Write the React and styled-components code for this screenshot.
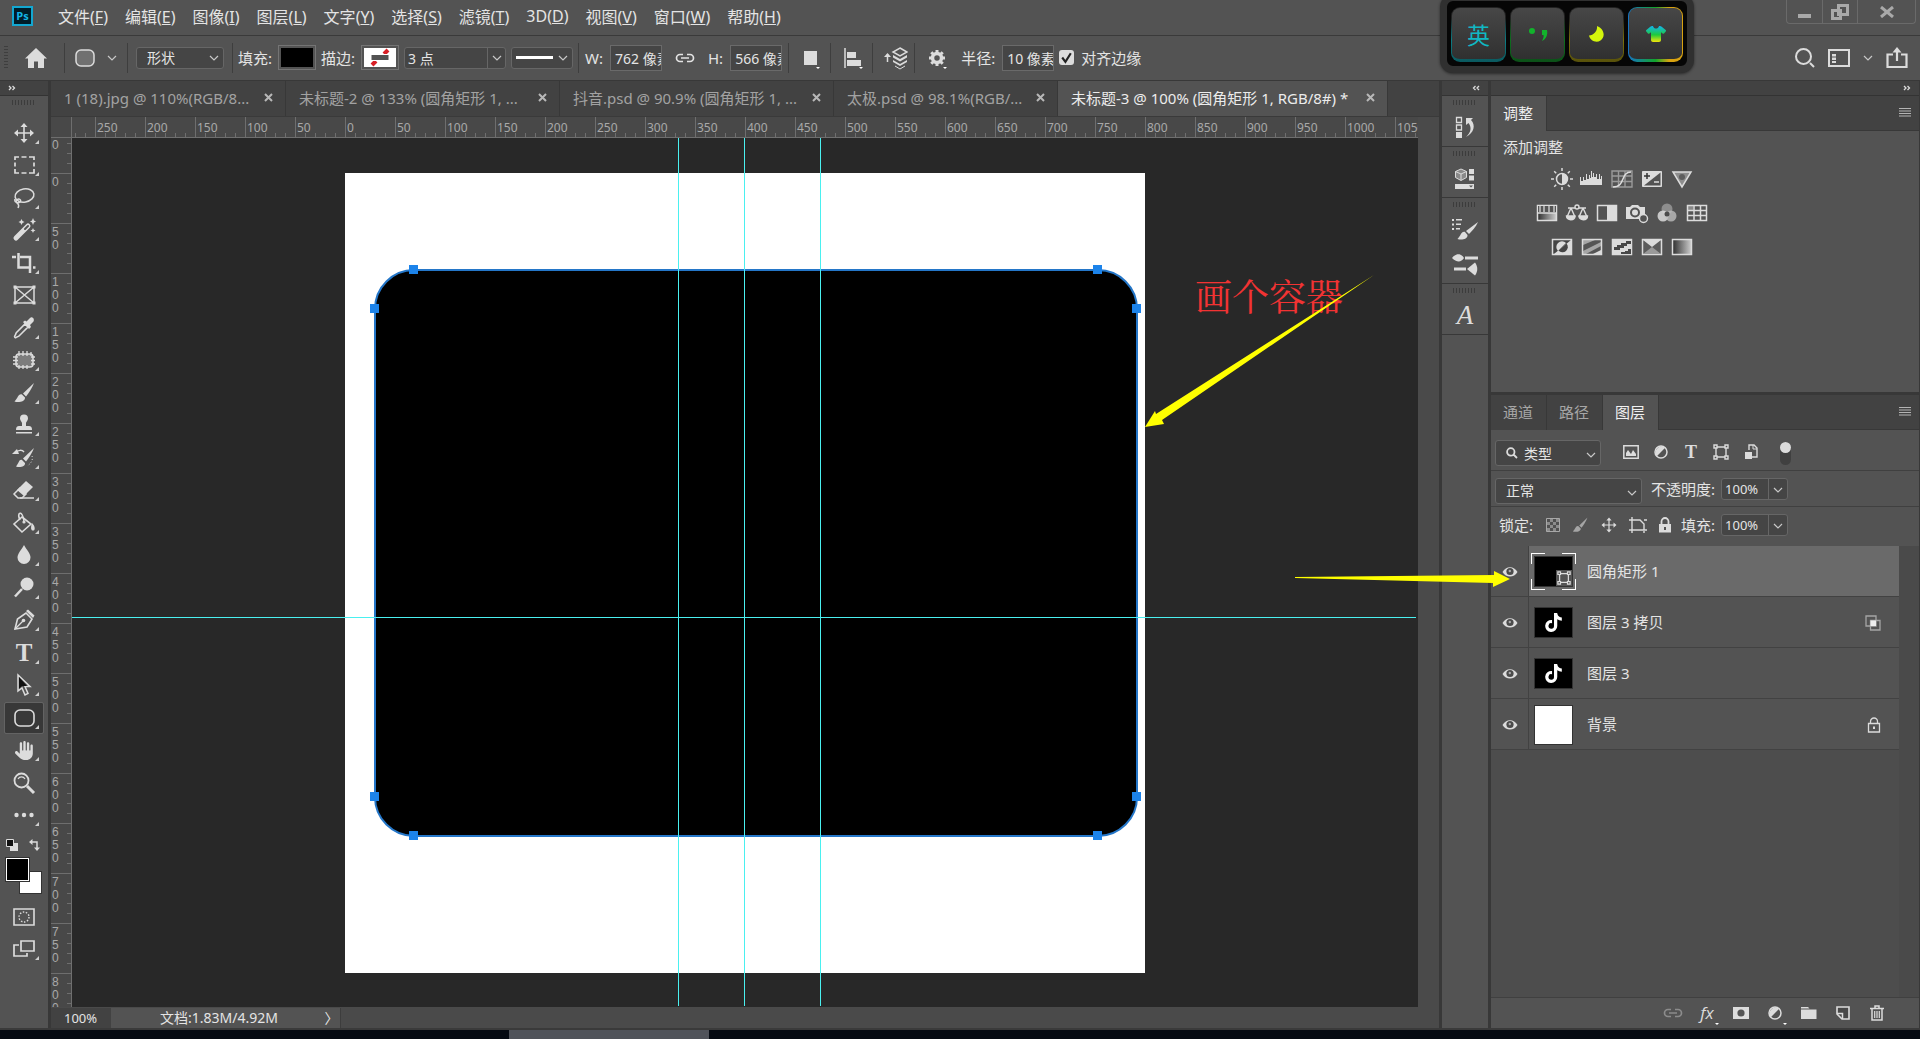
import React, { useState } from 'react'
import styled, { createGlobalStyle } from 'styled-components'
import { FaTiktok, FaHand, FaShirt } from 'react-icons/fa6'

const GlobalStyle = createGlobalStyle`
  * {
    box-sizing: border-box;
  }
  body {
    margin: 0;
    background: #050a12;
    color: #e4e4e4;
    font-family: 'Noto Sans', 'Noto Sans CJK SC', sans-serif;
    font-size: 15px;
  }
  button, input, select {
    font: inherit;
    color: inherit;
  }
  button {
    background: none;
    border: 0;
    padding: 0;
    cursor: pointer;
  }
  svg {
    display: block;
    flex: none;
  }
`

const L = '#dcdcdc'

// width, height, drawing
const ICONS = {
  home: [22, 20, <path d="M11 0 22 10.500H19V20H13V13.500H9V20H3V10.500H0z" fill={L} />],
  roundRect: [22, 20, <rect x="1" y="2" width="18" height="16" rx="5" fill="#707070" stroke={L} strokeWidth="1.500" />],
  chevron: [10, 6, <path d="M1 1l4 4 4-4" fill="none" stroke="#c8c8c8" strokeWidth="1.200" />],
  noStroke: [32, 19, <g><path d="M0 0h32v19H0z" fill="#fff" /><path d="M8 17 12 13M20 6 24 2" stroke="#d81f26" strokeWidth="4" /><path d="M7 6.500h18v6H7z" fill="#535353" stroke="#fff" /></g>],
  link: [20, 12, <path d="M8 2.500H5a3.500 3.500 0 0 0 0 7h3M12 2.500h3a3.500 3.500 0 0 1 0 7h-3M6 6h8" fill="none" stroke="currentColor" strokeWidth="1.700" />],
  square: [16, 22, <g><path d="M0 4h13v14H0z" fill={L} /><path d="M12 20h4l-2 2z" fill="#fff" /></g>],
  align: [20, 22, <g><path d="M1 1v20" stroke={L} strokeWidth="1.500" /><path d="M3 5h9v6H3zM3 13h14v6H3z" fill={L} /><path d="M15 20h4l-2 2z" fill="#fff" /></g>],
  stack: [24, 24, <g fill={L}><path d="M16 2l7 4-7 4-7-4z" fill="none" stroke={L} strokeWidth="1.500" /><path d="M9 9l7 4 7-4v2.500l-7 4-7-4z" /><path d="M9 14l7 4 7-4v2l-7 4-7-4z" /><path d="M11 20l5 3 5-3" fill="none" stroke={L} /><path d="M3.500 8v8" stroke={L} strokeWidth="1.500" /><path d="M0 11l3.500-4L7 11z" /></g>],
  gear: [20, 22, <g><circle cx="9" cy="11" r="4.500" fill="none" stroke={L} strokeWidth="3.500" /><path d="M9 3v4M9 15v4M1 11h4M13 11h4M3.300 5.300l2.900 2.900M11.800 13.800l2.900 2.900M14.700 5.300l-2.900 2.900M6.200 13.800l-2.900 2.900" stroke={L} strokeWidth="3" /><path d="M15 20h4l-2 2z" fill="#fff" /></g>],
  search: [20, 20, <path d="M15 15l4 4M8.500 1a7.500 7.500 0 1 0 0 15 7.500 7.500 0 0 0 0-15z" fill="none" stroke={L} strokeWidth="2" />],
  workspace: [22, 18, <g><path d="M1 1h20v16H1z" fill="none" stroke={L} strokeWidth="2" /><path d="M4 5h4v2.500H4zM4 8.500h4V11H4zM4 12h4v2H4z" fill={L} /></g>],
  share: [22, 22, <g><path d="M7 7.500H1.500V20h19V7.500H15M11 3v11" fill="none" stroke={L} strokeWidth="2.200" /><path d="M6.500 5.500 11 0l4.500 5.500z" fill={L} /></g>],
  close: [9, 9, <path d="M1 1l7 7M8 1 1 8" stroke="currentColor" strokeWidth="2" />],
  menu: [12, 9, <path d="M0 .5h12M0 3h12M0 5.500h12M0 8h12" stroke="#b4b4b4" strokeWidth="1" />],
  left: [8, 6, <path d="M3.500 1 1.500 3l2 2M7 1 5 3l2 2" fill="none" stroke={L} strokeWidth="1.300" />],
  right: [8, 6, <path d="M1 1l2 2-2 2M4.500 1l2 2-2 2" fill="none" stroke={L} strokeWidth="1.300" />],
  winMin: [14, 14, <path d="M0 9h13v4H0z" fill="#a9a9a9" />],
  winRestore: [18, 16, <path d="M7.500 1.500h9v9h-9zM1.500 6.500h8v8h-8z" fill="none" stroke="#a9a9a9" strokeWidth="3" />],
  winClose: [14, 12, <path d="M1 1l12 10M13 1 1 11" stroke="#a9a9a9" strokeWidth="3" />],

  move: [24, 24, <g fill={L}><path d="M12 4v16M4 12h16" stroke={L} strokeWidth="1.600" /><path d="M8.500 6 12 2l3.500 4zM8.500 18l3.500 4 3.500-4zM6 8.500 2 12l4 3.500zM18 8.500l4 3.500-4 3.500z" /></g>],
  marquee: [24, 24, <path d="M7 4H3v3M3 9.500v4M3 16v4h4M9.500 4h5M9.500 20h5M17 4h5v3M22 9.500v4M22 16v4h-5" fill="none" stroke={L} strokeWidth="1.700" />],
  lasso: [24, 24, <g fill="none" stroke={L} strokeWidth="1.500"><ellipse cx="12.500" cy="9.500" rx="9.500" ry="6.500" transform="rotate(-10 12.500 9.500)" /><path d="M3 13c-1 3 3 5 5 3s-1-4-3-2 0 3 1 4 1 2 0 4" /></g>],
  wand: [24, 24, <g fill={L}><path d="M4 20 16 8" stroke={L} strokeWidth="5" strokeLinecap="round" /><path d="M13 11l3-3" stroke="#535353" strokeWidth="2" strokeLinecap="round" /><path d="M9.500 1l1 2 2 1-2 1-1 2-1-2-2-1 2-1zM21 0l1 2.500 2 1-2 1-1 2.500-1-2.500-2-1 2-1zM21 10l.8 1.700 1.700.8-1.700.8L21 15l-.8-1.700-1.700-.8 1.700-.8z" /></g>],
  crop: [24, 24, <path d="M0 6h4M6.500 2v14.500H19M8 6h10v16M21 16.500h2.500" fill="none" stroke={L} strokeWidth="2.500" />],
  frame: [24, 24, <g><path d="M3 4h19v16H3zM3 4l19 16M22 4 3 20" fill="none" stroke={L} strokeWidth="1.500" /><path d="M1.500 2.500h3v3h-3zM20.500 2.500h3v3h-3zM1.500 18.500h3v3h-3zM20.500 18.500h3v3h-3z" fill={L} /></g>],
  eyedropper: [24, 24, <g><path d="M13 8l3 3L7 20c-1 1-2 .5-3 1.500s-2-1-1-2 .5-2 1.500-3z" fill="none" stroke={L} strokeWidth="1.600" /><path d="M11 6l2-1.500 1.500 1L18 2c2-2 5 1 3.500 3.500L18 9l1 2-2 2z" fill={L} /></g>],
  patch: [24, 24, <g><rect x="4" y="6" width="17" height="13" rx="3" fill="#7c7c7c" stroke={L} strokeWidth="1.600" /><path d="M7 3v5M11 3v5M15 3v5M19 4v4M7 17v4M11 17v4M15 17v4M1 9h5M1 12.500h5M1 16h5M19 9h4M19 12.500h4M19 16h4" stroke={L} strokeWidth="1.300" /></g>],
  brush: [24, 24, <g fill={L}><path d="M22 2 11 12.500l3 3C17 12 20 7 22 2z" /><path d="M10 13.500c-4-1-4 4-7.500 7 4 1.500 11 0 10.500-4z" /></g>],
  stamp: [24, 24, <g fill={L}><path d="M12 1.500a4 4 0 0 0-4 4c0 2 1.700 3 2 4.500v3H7c-2 0-3 1-3 4h16c0-3-1-4-3-4h-3v-3c.3-1.500 2-2.500 2-4.500a4 4 0 0 0-4-4z" /><path d="M4 19h16v1.500H4z" /></g>],
  history: [24, 24, <g fill={L}><path d="M22 2 11 12.500l3 3C17 12 20 7 22 2z" /><path d="M10 14c-3-1-3 3-6 6.500 4 1.500 9.500 0 9-3.500z" /><path d="M12 6C10 3.500 6 4 4 6.500" fill="none" stroke={L} strokeWidth="1.500" /><path d="M0 8l5-5 2 5z" /><path d="M20 10c1 3 0 7-5 10" fill="none" stroke={L} strokeDasharray="1 2" /></g>],
  eraser: [24, 24, <g><path d="M14 3l7 6-9 9-7-6z" fill={L} /><path d="M8 10l6 6-4 4H6l-4-4z" fill="none" stroke={L} strokeWidth="1.500" /><path d="M8 20h14" stroke={L} strokeWidth="1.500" /></g>],
  bucket: [24, 24, <g><path d="M10 6l9 7-9 8-8-8z" fill="none" stroke={L} strokeWidth="1.600" /><path d="M12 11c0-5-3-11-5-8-1 2 0 4 1 6" fill="none" stroke={L} strokeWidth="1.500" /><circle cx="12" cy="11" r="1.600" fill={L} /><path d="M20 12c3 3 3.500 7 1.500 7.500s-3.500-1.500-1.500-7.500z" fill={L} /></g>],
  drop: [24, 24, <path d="M12 2c3 5.500 6.500 8.500 6.500 12.500a6.500 6.500 0 0 1-13 0C5.500 10.500 9 7.500 12 2z" fill={L} />],
  dodge: [24, 24, <g><circle cx="15" cy="8" r="6.500" fill={L} /><path d="M10 13l-7 7.500" stroke={L} strokeWidth="2.500" /></g>],
  pen: [24, 24, <g><path d="M3 21 5.500 11 14 5l6 6-5 8z" fill="none" stroke={L} strokeWidth="1.600" /><path d="M3 21l8-8" stroke={L} strokeWidth="1.300" /><circle cx="11.500" cy="12.500" r="1.800" fill={L} /><path d="M14 3l2-1.500 6.500 6L21 10z" fill={L} /></g>],
  arrow: [24, 24, <g><path d="M6 2v16l4-3 3 7 3-1.500-3-7h5z" fill="#535353" stroke={L} strokeWidth="1.500" /><path d="M7 4v11.500l3-2.500h5z" fill="#111" /></g>],
  rounded: [24, 24, <rect x="3" y="4" width="19" height="16" rx="5" fill="none" stroke={L} strokeWidth="1.600" />],
  zoom: [24, 24, <g><circle cx="9.500" cy="9.500" r="7" fill="none" stroke={L} strokeWidth="1.800" /><path d="M6 8a4 4 0 0 1 7 0" fill="none" stroke={L} strokeWidth="1.200" /><path d="M15 15l7 7" stroke={L} strokeWidth="3" /></g>],
  dots: [24, 24, <g fill={L}><circle cx="4.500" cy="12" r="2.200" /><circle cx="12" cy="12" r="2.200" /><circle cx="19.500" cy="12" r="2.200" /></g>],
  defaults: [12, 12, <g><path d="M4 4h8v8H4z" fill={L} /><path d="M.5.5h7v7h-7z" fill="#111" stroke={L} /></g>],
  swap: [12, 12, <g><path d="M2 3h6v7" fill="none" stroke={L} strokeWidth="1.500" /><path d="M0 3l3.500-3v6zM5 8.500h6L8 12z" fill={L} /></g>],
  quickMask: [24, 24, <g fill="none" stroke={L}><path d="M2 4h20v16H2z" strokeWidth="1.600" /><circle cx="12" cy="12" r="5" strokeWidth="1.400" strokeDasharray="1.500 1.600" /></g>],
  screen: [24, 24, <g fill="none" stroke={L} strokeWidth="1.700"><path d="M9 4h13v10H9z" /><path d="M7 8H2v11h13v-3" /></g>],

  historyPanel: [24, 24, <g><path d="M3.500 2.500h5v5h-5zM3.500 10h5v5h-5z" fill="none" stroke={L} strokeWidth="1.300" /><path d="M3 17h6v6H3z" fill={L} /><path d="M13 3h7l-2 2c5 5 3 13-5 17 5-5 6-9 2.500-14L13 10z" fill={L} /></g>],
  library: [24, 24, <g><path d="M8 3l5.500 2.500v6L8 14.500l-5.500-3v-6z" fill="#8a8a8a" stroke={L} /><path d="M2.500 5.500 8 8l5.500-2.500M8 8v6" fill="none" stroke={L} /><path d="M16 3h5v5h-5zM16 9.500h5v5h-5zM2 18h19v5H2z" fill={L} /><path d="M16 19.500h4l-2 2z" fill="#535353" /></g>],
  brushPanel: [28, 24, <g fill={L}><path d="M1 2h2v2H1zM1 6.500h2v2H1zM1 11h2v2H1zM5 2h6v1.500H5zM5 6.500h5V8H5zM5 11h4v1.500H5z" /><path d="M27 5 15 14l3 3c3-3 7-7 9-12z" /><path d="M14 15c-4-1-4 4-7.500 7 4 1.500 10.500 0 10-4z" /></g>],
  brushes: [28, 24, <g fill={L}><path d="M1 6c4-5 9-5 12 0-3 5-8 4-12 0zM14 4.500h13v3H14zM3 15.500h12v3H3z" /><path d="M16 17l8-6.500c3 4 3 9 0 13z" /></g>],

  brightness: [22, 22, <g><circle cx="11" cy="11" r="5.500" fill="none" stroke={L} strokeWidth="1.500" /><path d="M11 5.500a5.500 5.500 0 0 1 0 11z" fill={L} /><path d="M11 0v3M11 19v3M0 11h3M19 11h3M3.200 3.200l2 2M16.800 16.800l2 2M18.800 3.200l-2 2M5.200 16.800l-2 2" stroke={L} strokeWidth="1.500" /></g>],
  levels: [24, 22, <path d="M0 17V9h1v4h2V9h1v3h2V6h1v5h2V7h1v3h1V3h1v6h1V5h1v4h2V6h1v5h2V6h1v5h1V8h1v9z" fill={L} />],
  curves: [22, 22, <g fill="none"><path d="M1 3h20v16H1zM7.500 3v16M14 3v16M1 8h20M1 13.500h20" stroke="#9a9a9a" strokeWidth="1.400" /><path d="M2 19c13 0 7-15 18-15" stroke={L} strokeWidth="1.500" /></g>],
  exposure: [22, 22, <g><path d="M1.500 3.500h19v15h-19z" fill={L} stroke={L} /><path d="M19.500 4.500v13H3z" fill="#535353" /><path d="M6 5v6M3 8h6" stroke="#333" strokeWidth="1.500" /><path d="M13 14h5" stroke={L} strokeWidth="1.500" /></g>],
  vibrance: [22, 22, <g><path d="M2 4h18l-9 15z" fill="#8d8d8d" stroke={L} strokeWidth="1.500" /><circle cx="11" cy="9" r="3" fill="#5d5d5d" /></g>],
  hue: [22, 22, <g><path d="M1.500 3.500h19v15h-19z" fill="url(#ramp)" stroke={L} strokeWidth="1.500" /><path d="M2 4h18v7H2z" fill="#555" /><path d="M4 4v6M8 4v6M13 4v6M18 4v6" stroke="#aaa" strokeWidth="2" /><path d="M2 11h18" stroke={L} strokeWidth="1.500" /></g>],
  balance: [24, 22, <g fill="none" stroke={L} strokeWidth="1.400"><circle cx="12" cy="5" r="2" /><path d="M3 6h7M14 6h7M6 6l-4 9M6 6l4 9M18 6l-4 9M18 6l4 9" /><path d="M1.500 14h8.500c0 5-8.500 5-8.500 0zM14 14h8.500c0 5-8.500 5-8.500 0z" fill={L} /></g>],
  blackWhite: [22, 22, <g><path d="M1.500 3.500h19v15h-19z" fill="none" stroke={L} strokeWidth="1.500" /><path d="M11 3h9v16h-9z" fill={L} /></g>],
  photo: [24, 22, <g><path d="M1 5h4l2-2h6l2 2h5v12H1z" fill={L} /><circle cx="10" cy="10.500" r="4" fill={L} stroke="#535353" strokeWidth="2" /><circle cx="18.500" cy="16.500" r="4" fill="#535353" stroke={L} strokeWidth="1.400" /></g>],
  mixer: [22, 22, <g><circle cx="11" cy="7" r="5.500" fill="#8d8d8d" /><circle cx="7" cy="14" r="5.500" fill={L} fillOpacity=".85" /><circle cx="15" cy="14" r="5.500" fill="#bdbdbd" fillOpacity=".8" /><circle cx="11" cy="12" r="2.500" fill="#4a4a4a" /></g>],
  lookup: [22, 22, <g><path d="M1.500 3.500h19v15h-19z" fill="#555" /><path d="M2 4h5v4H2z" fill="#888" /><path d="M1.500 3.500h19v15h-19zM8 3v16M14.500 3v16M1 8.500h20M1 13.500h20" fill="none" stroke={L} strokeWidth="1.500" /></g>],
  invert: [22, 22, <g><path d="M1.500 3.500h19v15h-19z" fill="#454545" stroke={L} strokeWidth="1.500" /><path d="M20 4 3 18h17z" fill={L} /><path d="M15 7a5 5 0 0 0-8 8z" fill={L} /><path d="M15.500 7.500a5 5 0 0 1-8 7z" fill="#454545" /></g>],
  posterize: [22, 22, <g><path d="M1.500 3.500h19v15h-19z" fill="#555" /><path d="M2 9 14 4H2zM2 15 20 6v4L5 18H2z" fill={L} fillOpacity=".6" /><path d="M12 18l8-4v4z" fill={L} /><path d="M1.500 3.500h19v15h-19z" fill="none" stroke={L} strokeWidth="1.500" /></g>],
  threshold: [22, 22, <g><path d="M1.500 3.500h19v15h-19z" fill={L} stroke={L} strokeWidth="1.500" /><path d="M3 14v-3h3V9h4V7h5V5h5v3h-4v2h-3v2H9v2z" fill="#484848" /><path d="M10 18v-2h4v-1h3v-2h3v5z" fill="#484848" /></g>],
  selective: [22, 22, <g><path d="M1.500 3.500h19v15h-19z" fill="#5c5c5c" stroke={L} strokeWidth="1.500" /><path d="M2 4h18l-9 7z" fill={L} /><path d="M2 18l9-7 9 7z" fill="#9a9a9a" /></g>],
  gradient: [22, 22, <path d="M1.500 3.500h19v15h-19z" fill="url(#ramp)" stroke={L} strokeWidth="1.500" />],

  image: [16, 14, <g><path d="M.8.8h14.400v12.400H.8z" fill="none" stroke={L} strokeWidth="1.500" /><path d="M3 11V8l2-3 3 4 2-4 3 4v2z" fill={L} /></g>],
  half: [14, 14, <g><circle cx="7" cy="7" r="6" fill="none" stroke={L} strokeWidth="1.500" /><path d="M11.200 2.800A6 6 0 0 0 2.800 11.200z" fill={L} /></g>],
  shape: [16, 16, <g fill="#535353" stroke={L} strokeWidth="1.400"><path d="M3 3h10v10H3z" /><path d="M1 1h3v3H1zM12 1h3v3h-3zM1 12h3v3H1zM12 12h3v3h-3z" /></g>],
  smart: [14, 16, <g><path d="M5 6V1h5l3 3v9H8" fill="none" stroke={L} strokeWidth="1.400" /><path d="M9 1v4h4" fill="none" stroke={L} /><path d="M1 8h7v7H1z" fill={L} /></g>],
  smallSearch: [12, 12, <path d="M7.500 7.500 11 11M4.800 1.200a3.700 3.700 0 1 0 0 7.400 3.700 3.700 0 0 0 0-7.400z" fill="none" stroke={L} strokeWidth="1.800" />],
  pixels: [14, 14, <g><path d="M.5.5h13v13H.5z" fill="#8c8c8c" stroke="#a8a8a8" /><path d="M1 1h3v3H1zM7 1h3v3H7zM4 4h3v3H4zM10 4h3v3h-3zM1 7h3v3H1zM7 7h3v3H7zM4 10h3v3H4zM10 10h3v3h-3z" fill="#505050" /></g>],
  artboard: [18, 16, <path d="M3 0v16M0 3h11l4 4v6H0M15 3h3M13 13h5M15 14v2" fill="none" stroke={L} strokeWidth="1.400" />],
  padlock: [14, 16, <g><path d="M3.500 8V4.500a3.500 3.500 0 0 1 7 0V8" fill="none" stroke={L} strokeWidth="1.800" /><path d="M1 7h12v8.500H1z" fill={L} /><path d="M6 10h2v3H6z" fill="#535353" /></g>],
  padlockLine: [14, 16, <g fill="none" stroke={L} strokeWidth="1.300"><path d="M3.500 6.500V4.500a3.500 3.500 0 0 1 7 0v2M1.500 6.500h11v8.500h-11z" /><path d="M6 9.500h2v2.500H6z" fill={L} stroke="none" /></g>],
  blend: [16, 16, <g fill="none" stroke="#a5a5a5" strokeWidth="1.300"><path d="M1 1h10v10H1zM5.500 5.500h9.500V15H5.500z" /><path d="M5.500 5.500H11V11H5.500z" fill="#eee" stroke="none" /></g>],
  eye: [16, 12, <g><path d="M.5 6C4-.5 12-.5 15.500 6 12 12 4 12 .5 6z" fill={L} /><circle cx="8" cy="5.500" r="3.600" fill="#4b4b4b" /><circle cx="7.800" cy="5" r="1.200" fill="#aaa" /></g>],
  mask: [16, 12, <g><path d="M0 0h16v12H0z" fill={L} /><circle cx="8" cy="6" r="3.600" fill="#535353" /></g>],
  folder: [16, 14, <path d="M0 1h7l1.500 1.500H0zM0 3.500h15.500V13H0z" fill={L} />],
  page: [14, 14, <g><path d="M1 1h12v12H6L1 8z" fill="#484848" stroke={L} strokeWidth="1.600" /><path d="M1 7.500h5.500V13" fill="none" stroke={L} strokeWidth="1.500" /></g>],
  trash: [14, 16, <g fill="none" stroke={L} strokeWidth="1.500"><path d="M0 3.500h14M5 3V1h4v2M2 4v11h10V4" /><path d="M4.700 6v7M7 6v7M9.300 6v7" strokeWidth="1.200" /></g>],
  punctuation: [22, 18, <g fill="#12b32c"><circle cx="5" cy="6" r="3" /><path d="M15 5h5c1 5-1 9-5 11 1-2 2-4 1.500-6H15z" /></g>],
  moon: [18, 18, <path d="M9 1c.5 5-3 9-8 9.500 1 5 7 8 11.500 5C18 11.500 16 3.500 9 1z" fill="#d4f50c" />],
}

const Icon = ({ name, size }) => {
  const [w, h, art] = ICONS[name]
  return (
    <svg width={size || w} height={size || h} viewBox={`0 0 ${w} ${h}`} aria-hidden="true">{art}</svg>
  )
}

const MENUS = [['文件', 'F'], ['编辑', 'E'], ['图像', 'I'], ['图层', 'L'], ['文字', 'Y'], ['选择', 'S'], ['滤镜', 'T'], ['3D', 'D'], ['视图', 'V'], ['窗口', 'W'], ['帮助', 'H']]

const DOCS = [
  { title: '1 (18).jpg @ 110%(RGB/8...', width: 235 },
  { title: '未标题-2 @ 133% (圆角矩形 1, ...', width: 274 },
  { title: '抖音.psd @ 90.9% (圆角矩形 1, ...', width: 274 },
  { title: '太极.psd @ 98.1%(RGB/...', width: 224 },
  { title: '未标题-3 @ 100% (圆角矩形 1, RGB/8#) *', width: 330 },
]

const TOOLS = ['move', 'marquee', 'lasso', 'wand', 'crop', 'frame', 'eyedropper', 'patch', 'brush', 'stamp', 'history', 'eraser', 'bucket', 'drop', 'dodge', 'pen', 'type', 'arrow', 'rounded', 'hand', 'zoom', 'dots']
const NO_FLYOUT = ['frame', 'zoom']

const TOP_MARKS = [250, 200, 150, 100, 50, 0, 50, 100, 150, 200, 250, 300, 350, 400, 450, 500, 550, 600, 650, 700, 750, 800, 850, 900, 950, 1000, 1050]
const SIDE_MARKS = [0, 50, 100, 150, 200, 250, 300, 350, 400, 450, 500, 550, 600, 650, 700, 750, 800]

const ADJUSTMENTS = [
  ['brightness', 'levels', 'curves', 'exposure', 'vibrance'],
  ['hue', 'balance', 'blackWhite', 'photo', 'mixer', 'lookup'],
  ['invert', 'posterize', 'threshold', 'selective', 'gradient'],
]

const LAYERS = [
  { name: '圆角矩形 1', kind: 'shape' },
  { name: '图层 3 拷贝', kind: 'tiktok', badge: 'blend' },
  { name: '图层 3', kind: 'tiktok' },
  { name: '背景', kind: 'plain', badge: 'padlockLine' },
]

const HANDLES = [[39, 0], [723, 0], [0, 39], [762, 39], [0, 527], [762, 527], [39, 566], [723, 566]]

const App = () => {
  const [activeDoc, setActiveDoc] = useState(4)
  const [tool, setTool] = useState('rounded')
  const [layer, setLayer] = useState(0)

  return (
    <>
      <GlobalStyle />
      <Defs width="0" height="0" aria-hidden="true">
        <linearGradient id="ramp"><stop offset="0" stopColor="#2e2e2e" /><stop offset="1" stopColor="#cfcfcf" /></linearGradient>
        <linearGradient id="shirt" x1="0" y1="0" x2="0" y2="1"><stop offset="0" stopColor="#12b4f0" /><stop offset=".55" stopColor="#1ecb3c" /><stop offset="1" stopColor="#f4e60a" /></linearGradient>
      </Defs>
      <Window>
        <MenuBar>
          <Logo>Ps</Logo>
          {MENUS.map(([label, key]) => (
            <MenuItem key={key}>{label}(<u>{key}</u>)</MenuItem>
          ))}
          <WindowControls>
            <WindowButton aria-label="最小化"><Icon name="winMin" /></WindowButton>
            <WindowButton aria-label="还原"><Icon name="winRestore" /></WindowButton>
            <WindowButton $wide aria-label="关闭"><Icon name="winClose" /></WindowButton>
          </WindowControls>
        </MenuBar>

        <OptionsBar>
          <VerticalGrip />
          <HomeButton aria-label="主页"><Icon name="home" /></HomeButton>
          <Separator />
          <OptionGroup $pad={10} $gap={10}>
            <Icon name="roundRect" />
            <Icon name="chevron" />
          </OptionGroup>
          <Separator />
          <OptionGroup $pad={8} $gap={5}>
            <SelectBox $width={88}>
              <select aria-label="工具模式"><option>形状</option></select>
              <Icon name="chevron" />
            </SelectBox>
          </OptionGroup>
          <Separator />
          <OptionGroup $pad={5} $gap={5}>
            <OptionLabel>填充:</OptionLabel>
            <SwatchButton aria-label="填充颜色"><BlackFill /></SwatchButton>
            <OptionLabel>描边:</OptionLabel>
            <SwatchButton aria-label="描边颜色"><Icon name="noStroke" /></SwatchButton>
            <Combo $width={102}>
              <input aria-label="描边宽度" defaultValue="3 点" />
              <button aria-label="宽度选项"><Icon name="chevron" /></button>
            </Combo>
            <LineButton aria-label="描边选项"><LineSample /><Icon name="chevron" /></LineButton>
          </OptionGroup>
          <Separator />
          <OptionGroup $pad={6} $gap={13}>
            <Field>W:<NumberInput defaultValue="762 像素" /></Field>
            <button aria-label="链接宽高"><Icon name="link" /></button>
            <Field>H:<NumberInput defaultValue="566 像素" /></Field>
          </OptionGroup>
          <Separator />
          {['square', 'align', 'stack'].map((name) => (
            <React.Fragment key={name}>
              <ToolOption aria-label={name}><Icon name={name} /></ToolOption>
              <Separator />
            </React.Fragment>
          ))}
          <ToolOption aria-label="gear"><Icon name="gear" /></ToolOption>
          <OptionGroup $pad={5} $gap={5}>
            <Field>半径:<NumberInput defaultValue="10 像素" /></Field>
            <Field><CheckInput type="checkbox" defaultChecked />对齐边缘</Field>
          </OptionGroup>
          <OptionsRight>
            <button aria-label="搜索"><Icon name="search" /></button>
            <button aria-label="工作区"><Icon name="workspace" /></button>
            <Icon name="chevron" />
            <button aria-label="共享"><Icon name="share" /></button>
          </OptionsRight>
        </OptionsBar>

        <Workspace>
          <ToolColumn>
            <CollapseBar $start><Icon name="right" /></CollapseBar>
            <Grip />
            <ToolList>
              {TOOLS.map((name) => (
                <ToolButton key={name} $active={tool === name} $flyout={!NO_FLYOUT.includes(name)} aria-label={name} onClick={() => setTool(name)}>
                  {name === 'type' ? <TypeGlyph>T</TypeGlyph> : name === 'hand' ? <FaHand size={19} color={L} /> : <Icon name={name} />}
                </ToolButton>
              ))}
            </ToolList>
            <ColorTools>
              <Icon name="defaults" />
              <Icon name="swap" />
            </ColorTools>
            <ColorPair>
              <ColorChip $color="#fff" />
              <ColorChip $front $color="#000" />
            </ColorPair>
            <ToolButton aria-label="quickMask"><Icon name="quickMask" /></ToolButton>
            <ToolButton $flyout aria-label="screen"><Icon name="screen" /></ToolButton>
          </ToolColumn>

          <Editor>
            <DocTabs>
              {DOCS.map((doc, i) => (
                <DocTab key={doc.title} $active={i === activeDoc} $width={doc.width}>
                  <button onClick={() => setActiveDoc(i)}>{doc.title}</button>
                  <button aria-label="关闭文档"><Icon name="close" /></button>
                </DocTab>
              ))}
            </DocTabs>
            <EditorBody>
              <EditorMain>
                <TopRuler>
                  <RulerCorner />
                  <TopLead />
                  {TOP_MARKS.map((mark, i) => <TopMark key={i}>{mark}</TopMark>)}
                </TopRuler>
                <StageRow>
                  <SideRuler>
                    <SideLead>0</SideLead>
                    {SIDE_MARKS.map((mark) => (
                      <SideMark key={mark}>{String(mark).split('').map((d, i) => <span key={i}>{d}</span>)}</SideMark>
                    ))}
                  </SideRuler>
                  <Stage>
                    <Artboard>
                      <ShapeLayer width="782" height="586" viewBox="-10 -10 782 586" aria-hidden="true">
                        <rect x="0" y="0" width="762" height="566" rx="39" fill="#000" stroke="#2476c8" strokeWidth="2" />
                        {HANDLES.map(([x, y]) => (
                          <rect key={`${x}-${y}`} x={x - 5} y={y - 5} width="9" height="9" fill="#1c83ea" />
                        ))}
                      </ShapeLayer>
                    </Artboard>
                    <GuideX $at={606} />
                    <GuideX $at={672} />
                    <GuideX $at={748} />
                    <GuideY $at={479} />
                  </Stage>
                </StageRow>
              </EditorMain>
              <ScrollTrack />
            </EditorBody>
            <StatusBar>
              <ZoomInput aria-label="缩放" defaultValue="100%" />
              <DocInfo>文档:1.83M/4.92M</DocInfo>
              <StatusMore aria-label="状态选项">〉</StatusMore>
            </StatusBar>
          </Editor>

          <IconStrip>
            <CollapseBar><Icon name="left" /></CollapseBar>
            <StripGroup><Grip /><StripButton aria-label="历史记录"><Icon name="historyPanel" /></StripButton></StripGroup>
            <StripGroup><Grip /><StripButton aria-label="库"><Icon name="library" /></StripButton></StripGroup>
            <StripGroup>
              <Grip />
              <StripButton aria-label="画笔设置"><Icon name="brushPanel" /></StripButton>
              <StripButton aria-label="画笔"><Icon name="brushes" /></StripButton>
            </StripGroup>
            <StripGroup><Grip /><StripButton aria-label="字形"><ScriptGlyph>A</ScriptGlyph></StripButton></StripGroup>
          </IconStrip>

          <Panels>
            <CollapseBar><Icon name="right" /></CollapseBar>
            <AdjustPanel>
              <PanelTabs>
                <PanelTab $active>调整</PanelTab>
                <PanelMenu aria-label="面板菜单"><Icon name="menu" /></PanelMenu>
              </PanelTabs>
              <AdjustHint>添加调整</AdjustHint>
              <AdjustGrid>
                {ADJUSTMENTS.map((row) => (
                  <AdjustRow key={row[0]}>
                    {row.map((name) => <AdjustButton key={name} aria-label={name}><Icon name={name} /></AdjustButton>)}
                  </AdjustRow>
                ))}
              </AdjustGrid>
            </AdjustPanel>

            <LayerPanel>
              <PanelTabs>
                <PanelTab>通道</PanelTab>
                <PanelTab>路径</PanelTab>
                <PanelTab $active>图层</PanelTab>
                <PanelMenu aria-label="面板菜单"><Icon name="menu" /></PanelMenu>
              </PanelTabs>
              <FilterRow>
                <SelectBox $width={106} $tall $icon>
                  <Icon name="smallSearch" />
                  <select aria-label="图层过滤"><option>类型</option></select>
                  <Icon name="chevron" />
                </SelectBox>
                <FilterIcons>
                  <FilterButton aria-label="像素图层"><Icon name="image" /></FilterButton>
                  <FilterButton aria-label="调整图层"><Icon name="half" /></FilterButton>
                  <FilterButton aria-label="文字图层"><SmallType>T</SmallType></FilterButton>
                  <FilterButton aria-label="形状图层"><Icon name="shape" /></FilterButton>
                  <FilterButton aria-label="智能对象"><Icon name="smart" /></FilterButton>
                </FilterIcons>
                <FilterToggle aria-label="打开过滤" />
              </FilterRow>
              <LayerOptionRow>
                <SelectBox $width={147} $tall>
                  <select aria-label="混合模式"><option>正常</option></select>
                  <Icon name="chevron" />
                </SelectBox>
                <PercentField>
                  不透明度:
                  <Combo $width={67} $small><input defaultValue="100%" /><ComboArrow><Icon name="chevron" /></ComboArrow></Combo>
                </PercentField>
              </LayerOptionRow>
              <LockRow>
                <span>锁定:</span>
                <LockIcons>
                  <button aria-label="锁定透明像素"><Icon name="pixels" /></button>
                  <DimButton aria-label="锁定图像像素"><Icon name="brush" size={18} /></DimButton>
                  <button aria-label="锁定位置"><Icon name="move" size={18} /></button>
                  <button aria-label="锁定画板"><Icon name="artboard" /></button>
                  <button aria-label="锁定全部"><Icon name="padlock" /></button>
                </LockIcons>
                <PercentField>
                  填充:
                  <Combo $width={67} $small><input defaultValue="100%" /><ComboArrow><Icon name="chevron" /></ComboArrow></Combo>
                </PercentField>
              </LockRow>
              <LayerArea>
                <LayerList>
                  {LAYERS.map((item, i) => (
                    <LayerRow key={item.name}>
                      <EyeButton aria-label="切换可见性"><Icon name="eye" /></EyeButton>
                      <LayerBody $active={i === layer} onClick={() => setLayer(i)}>
                        <Thumb $kind={item.kind}>
                          {item.kind === 'tiktok' && <FaTiktok size={19} color="#fff" />}
                          {item.kind === 'shape' && <ThumbBadge><Icon name="shape" size={14} /></ThumbBadge>}
                        </Thumb>
                        <LayerName>{item.name}</LayerName>
                        {item.badge && <Icon name={item.badge} />}
                      </LayerBody>
                    </LayerRow>
                  ))}
                </LayerList>
                <LayerScroll />
              </LayerArea>
              <LayerFooter>
                <FooterButton $dim aria-label="链接图层"><Icon name="link" /></FooterButton>
                <FooterButton $flyout aria-label="图层样式"><Fx>fx</Fx></FooterButton>
                <FooterButton aria-label="添加蒙版"><Icon name="mask" /></FooterButton>
                <FooterButton $flyout aria-label="新建调整图层"><Icon name="half" /></FooterButton>
                <FooterButton aria-label="新建组"><Icon name="folder" /></FooterButton>
                <FooterButton aria-label="新建图层"><Icon name="page" /></FooterButton>
                <FooterButton aria-label="删除图层"><Icon name="trash" /></FooterButton>
              </LayerFooter>
            </LayerPanel>
          </Panels>
        </Workspace>
        <Taskbar><TaskItem /></Taskbar>

        <ImeBar>
          <ImeKey $color="#10b8c4" aria-label="英">英</ImeKey>
          <ImeKey $color="#12a52c" aria-label="标点"><Icon name="punctuation" /></ImeKey>
          <ImeKey $color="#b5a710" aria-label="夜间"><Icon name="moon" /></ImeKey>
          <ImeKey $rainbow aria-label="皮肤"><FaShirt size={20} fill="url(#shirt)" /></ImeKey>
        </ImeBar>

        <Note>画个容器</Note>
        <Arrows width="400" height="340" viewBox="1130 260 400 340" aria-hidden="true">
          <path d="M1374 275 1156 414 1155 411 1145 427 1164 424 1162 420z" fill="#ff0" />
          <path d="M1295 577 1494 575V571L1510 579 1493 587V583L1295 578z" fill="#ff0" />
        </Arrows>
      </Window>
    </>
  )
}

const Defs = styled.svg`
  position: absolute;
`

const Window = styled.div`
  position: relative;
  display: flex;
  flex-direction: column;
  height: 100vh;
  overflow: hidden;
`

const MenuBar = styled.nav`
  display: flex;
  align-items: center;
  height: 36px;
  padding-left: 12px;
  background: #535353;
  border-bottom: 1px solid #3a3a3a;
`

const Logo = styled.div`
  width: 21px;
  height: 20px;
  margin: 0 17px 4px 0;
  border: 2px solid #13a7d1;
  background: #001d29;
  color: #13b5e6;
  font: bold 11px/16px 'Open Sans', sans-serif;
  text-align: center;
`

const MenuItem = styled.button`
  height: 32px;
  padding: 0 9px 0 8px;
  margin-bottom: 4px;
  font-size: 16px;
  white-space: nowrap;
`

const WindowControls = styled.div`
  display: flex;
  align-self: flex-start;
  height: 24px;
  margin: 0 4px 0 auto;
  border: 1px solid #6a6a6a;
  border-top: 0;
  border-radius: 0 0 4px 4px;
`

const WindowButton = styled.button`
  display: flex;
  align-items: center;
  justify-content: center;
  width: ${({ $wide }) => ($wide ? '58px' : '35px')};
  & + & {
    border-left: 1px solid #6a6a6a;
  }
`

const OptionsBar = styled.div`
  display: flex;
  align-items: center;
  height: 45px;
  padding: 0 12px 1px 4px;
  background: #535353;
  border-bottom: 1px solid #383838;
  white-space: nowrap;
`

const VerticalGrip = styled.div`
  width: 4px;
  height: 24px;
  background: repeating-linear-gradient(#3e3e3e 0 1px, transparent 1px 3px);
`

const HomeButton = styled.button`
  display: flex;
  justify-content: center;
  width: 56px;
`

const Separator = styled.span`
  width: 1px;
  height: 30px;
  flex: none;
  background: #3e3e3e;
`

const OptionGroup = styled.div`
  display: flex;
  align-items: center;
  padding: 0 ${({ $pad }) => $pad}px;
  gap: ${({ $gap }) => $gap}px;
`

const OptionLabel = styled.span`
  width: 35px;
`

const SelectBox = styled.span`
  display: flex;
  align-items: center;
  width: ${({ $width }) => $width}px;
  height: ${({ $tall }) => ($tall ? '26px' : '22px')};
  padding: 0 4px 0 ${({ $icon }) => ($icon ? '10px' : '8px')};
  border: 1px solid #666;
  border-radius: 3px;
  background: #454545;
  select {
    flex: 1;
    min-width: 0;
    height: 20px;
    padding: 0 0 0 ${({ $icon }) => ($icon ? '6px' : '2px')};
    border: 0;
    background: #454545;
    font-size: 14px;
    appearance: none;
  }
  select + svg {
    margin-top: ${({ $tall }) => ($tall ? '4px' : '0')};
  }
`

const SwatchButton = styled.button`
  padding: 2px;
  border: 1px solid #747474;
`

const BlackFill = styled.span`
  display: block;
  width: 32px;
  height: 19px;
  background: #000;
`

const Combo = styled.span`
  display: flex;
  width: ${({ $width }) => $width}px;
  height: 22px;
  border: 1px solid #666;
  border-radius: 3px;
  background: #454545;
  input {
    flex: 1;
    min-width: 0;
    padding: 0 3px;
    border: 0;
    background: none;
    font-size: ${({ $small }) => ($small ? '13px' : '14px')};
  }
  button {
    display: flex;
    align-items: center;
    justify-content: center;
    width: 18px;
    border-left: 1px solid #666;
  }
`

const ComboArrow = styled.span`
  display: flex;
  align-items: center;
  justify-content: center;
  width: 19px;
  padding-top: 2px;
  border-left: 1px solid #666;
`

const LineButton = styled.button`
  display: flex;
  align-items: center;
  justify-content: space-between;
  width: 62px;
  height: 22px;
  padding: 0 4px;
  border: 1px solid #666;
  border-radius: 3px;
  background: #454545;
`

const LineSample = styled.span`
  width: 37px;
  height: 3px;
  background: #fff;
`

const Field = styled.label`
  display: flex;
  align-items: center;
  gap: 7px;
`

const NumberInput = styled.input`
  width: 52px;
  height: 26px;
  padding: 0 0 0 4px;
  border: 1px solid #6a6a6a;
  background: #454545;
  font-size: 14px;
`

const CheckInput = styled.input`
  width: 15px;
  height: 15px;
  margin: 0;
  border-radius: 3px;
  background: #dcdcdc url("data:image/svg+xml,%3Csvg xmlns='http://www.w3.org/2000/svg' viewBox='0 0 14 14'%3E%3Cpath d='M3 7l3 4 5-8' fill='none' stroke='%23222' stroke-width='2'/%3E%3C/svg%3E");
  appearance: none;
`

const ToolOption = styled.button`
  display: flex;
  justify-content: center;
  width: 41px;
  padding-left: 5px;
`

const OptionsRight = styled.div`
  display: flex;
  align-items: center;
  gap: 13px;
  margin-left: auto;
`

const Workspace = styled.div`
  display: flex;
  flex: 1;
  min-height: 0;
  border-bottom: 2px solid #3a3a3a;
`

const CollapseBar = styled.div`
  display: flex;
  align-items: center;
  justify-content: ${({ $start }) => ($start ? 'flex-start' : 'flex-end')};
  height: 15px;
  flex: none;
  padding: 0 8px;
  background: #424242;
  border-bottom: 1px solid #333;
`

const Grip = styled.div`
  width: 24px;
  height: 5px;
  flex: none;
  margin: 4px auto 0;
  background: repeating-linear-gradient(90deg, #3c3c3c 0 1px, transparent 1px 3px);
`

const ToolColumn = styled.aside`
  display: flex;
  flex-direction: column;
  width: 51px;
  flex: none;
  background: #535353;
  border-right: 3px solid #383838;
`

const ToolList = styled.div`
  display: flex;
  flex-direction: column;
  padding-top: 12px;
`

const ToolButton = styled.button`
  position: relative;
  display: flex;
  align-items: center;
  justify-content: center;
  width: 40px;
  height: 32px;
  margin: 0 4px;
  border: 1px solid ${({ $active }) => ($active ? '#636363' : 'transparent')};
  border-radius: 2px;
  background: ${({ $active }) => ($active ? '#383838' : 'none')};
  background-clip: padding-box;
  ${ToolList} &:nth-child(2n) {
    margin-bottom: 1px;
  }
  &::after {
    content: '';
    display: ${({ $flyout }) => ($flyout ? 'block' : 'none')};
    position: absolute;
    right: 4px;
    bottom: 4px;
    border: 2px solid transparent;
    border-right-color: #cfcfcf;
    border-bottom-color: #cfcfcf;
  }
`

const TypeGlyph = styled.span`
  color: #dcdcdc;
  font: bold 25px/24px 'Liberation Serif', serif;
`

const ColorTools = styled.div`
  display: flex;
  justify-content: space-between;
  width: 35px;
  padding: 7px 0 0;
  margin-left: 6px;
`

const ColorPair = styled.div`
  position: relative;
  width: 36px;
  height: 36px;
  margin: 7px 0 7px 6px;
`

const ColorChip = styled.span`
  position: absolute;
  ${({ $front }) => ($front ? 'left: 0; top: 0;' : 'right: 0; bottom: 0;')}
  width: 23px;
  height: 23px;
  border: 1px solid ${({ $front }) => ($front ? '#fff' : '#333')};
  outline: ${({ $front }) => ($front ? '1px solid #333' : 'none')};
  background: ${({ $color }) => $color};
`

const Editor = styled.main`
  display: flex;
  flex-direction: column;
  flex: 1;
  min-width: 0;
`

const DocTabs = styled.div`
  display: flex;
  height: 36px;
  flex: none;
  background: #424242;
  border-bottom: 1px solid #3a3a3a;
`

const DocTab = styled.div`
  display: flex;
  align-items: center;
  justify-content: space-between;
  width: ${({ $width }) => $width}px;
  padding: 0 12px 2px 13px;
  border-right: 1px solid #383838;
  background: ${({ $active }) => ($active ? '#535353' : '#424242')};
  color: ${({ $active }) => ($active ? '#ececec' : '#a2a2a2')};
  white-space: nowrap;
  button:last-child {
    color: #b8b8b8;
  }
`

const EditorBody = styled.div`
  display: flex;
  flex: 1;
  min-height: 0;
`

const EditorMain = styled.div`
  display: flex;
  flex-direction: column;
  flex: 1;
  min-width: 0;
`

const TopRuler = styled.div`
  display: flex;
  height: 21px;
  flex: none;
  overflow: hidden;
  background: #484848;
  border-bottom: 1px solid #6e6e6e;
  color: #a8a8a8;
  font-size: 12px;
  line-height: 22px;
`

const RulerCorner = styled.div`
  width: 21px;
  flex: none;
  border-right: 1px solid #6e6e6e;
`

const TopLead = styled.div`
  width: 23px;
  flex: none;
  background: repeating-linear-gradient(270deg, transparent 0 9px, #6e6e6e 9px 10px) bottom / 100% 4px no-repeat;
`

const TopMark = styled.div`
  width: 50px;
  flex: none;
  padding-left: 1px;
  border-left: 1px solid #6e6e6e;
  background: repeating-linear-gradient(90deg, transparent 0 9px, #6e6e6e 9px 10px) bottom / 100% 4px no-repeat;
`

const StageRow = styled.div`
  display: flex;
  flex: 1;
  min-height: 0;
`

const SideRuler = styled.div`
  width: 21px;
  flex: none;
  overflow: hidden;
  background: #484848;
  border-right: 1px solid #6e6e6e;
  color: #a8a8a8;
  font: 12px/13px 'Liberation Sans', sans-serif;
`

const SideLead = styled.div`
  height: 35px;
  padding: 1px 0 0 1px;
  background: repeating-linear-gradient(0deg, transparent 0 9px, #6e6e6e 9px 10px) right / 4px 100% no-repeat;
`

const SideMark = styled.div`
  display: flex;
  flex-direction: column;
  height: 50px;
  padding: 2px 0 0 1px;
  border-top: 1px solid #6e6e6e;
  background: repeating-linear-gradient(transparent 0 9px, #6e6e6e 9px 10px) right / 4px 100% no-repeat;
`

const Stage = styled.div`
  position: relative;
  flex: 1;
  overflow: hidden;
  background: #282828;
`

const Artboard = styled.div`
  position: absolute;
  left: 273px;
  top: 35px;
  width: 800px;
  height: 800px;
  background: #fff;
`

const ShapeLayer = styled.svg`
  position: absolute;
  left: 20px;
  top: 87px;
`

const GuideX = styled.span`
  position: absolute;
  top: 0;
  bottom: 1px;
  left: ${({ $at }) => $at}px;
  width: 1px;
  background: #4af0f0;
`

const GuideY = styled.span`
  position: absolute;
  left: 0;
  right: 2px;
  top: ${({ $at }) => $at}px;
  height: 1px;
  background: #4af0f0;
`

const ScrollTrack = styled.div`
  width: 21px;
  flex: none;
  background: #4a4a4a;
`

const StatusBar = styled.div`
  display: flex;
  align-items: center;
  height: 21px;
  flex: none;
  background: #4a4a4a;
  font-size: 14px;
  line-height: 20px;
`

const ZoomInput = styled.input`
  width: 60px;
  height: 20px;
  padding: 0 0 0 13px;
  border: 0;
  background: #424242;
  font-size: 13px;
`

const DocInfo = styled.span`
  width: 212px;
  padding-left: 49px;
  background: #535353;
`

const StatusMore = styled.button`
  width: 18px;
  height: 20px;
  border-right: 1px solid #3d3d3d;
  background: #535353;
  line-height: 18px;
  overflow: hidden;
`

const IconStrip = styled.aside`
  display: flex;
  flex-direction: column;
  width: 52px;
  flex: none;
  background: #535353;
  border-left: 3px solid #383838;
  border-right: 3px solid #383838;
`

const StripGroup = styled.div`
  display: flex;
  flex-direction: column;
  padding-bottom: 2px;
  border-bottom: 1px solid #383838;
`

const StripButton = styled.button`
  display: flex;
  align-items: center;
  justify-content: center;
  height: 35px;
  ${Grip} + & {
    margin-top: 4px;
  }
`

const ScriptGlyph = styled.span`
  color: #dcdcdc;
  font: italic 27px/26px 'Liberation Serif', serif;
`

const Panels = styled.aside`
  display: flex;
  flex-direction: column;
  width: 429px;
  flex: none;
  background: #535353;
  border-right: 1px solid #383838;
`

const AdjustPanel = styled.section`
  height: 299px;
  flex: none;
  border-bottom: 3px solid #383838;
`

const PanelTabs = styled.div`
  display: flex;
  align-items: stretch;
  height: 35px;
  flex: none;
  background: #424242;
  box-shadow: inset 0 -1px #383838;
`

const PanelTab = styled.button`
  padding: 0 13px 3px 12px;
  border-right: 1px solid #383838;
  background: ${({ $active }) => ($active ? '#535353' : '#424242')};
  color: ${({ $active }) => ($active ? '#f0f0f0' : '#a6a6a6')};
`

const PanelMenu = styled.button`
  padding: 0 8px 2px;
  margin-left: auto;
`

const AdjustHint = styled.p`
  margin: 0;
  padding: 5px 12px 6px;
  line-height: 22px;
`

const AdjustGrid = styled.div`
  display: flex;
  flex-direction: column;
  gap: 12px;
  width: 262px;
  padding-top: 4px;
`

const AdjustRow = styled.div`
  display: flex;
  justify-content: center;
`

const AdjustButton = styled.button`
  display: flex;
  justify-content: center;
  width: 30px;
`

const LayerPanel = styled.section`
  display: flex;
  flex-direction: column;
  flex: 1;
  min-height: 0;
`

const FilterRow = styled.div`
  display: flex;
  align-items: center;
  height: 41px;
  padding: 6px 4px 0;
  border-bottom: 1px solid #404040;
`

const FilterIcons = styled.div`
  display: flex;
  margin: 0 14px 2px 15px;
`

const FilterButton = styled.button`
  display: flex;
  align-items: center;
  justify-content: center;
  width: 30px;
  height: 20px;
`

const SmallType = styled.span`
  color: #dcdcdc;
  font: bold 18px/20px 'Liberation Serif', serif;
`

const FilterToggle = styled.button`
  display: flex;
  width: 11px;
  height: 23px;
  border-radius: 6px;
  background: #404040;
  &::before {
    content: '';
    width: 11px;
    height: 11px;
    border-radius: 50%;
    background: #dcdcdc;
  }
`

const LayerOptionRow = styled.div`
  display: flex;
  align-items: center;
  gap: 9px;
  height: 36px;
  padding: 4px 4px 0;
  border-bottom: 1px solid #404040;
`

const PercentField = styled.label`
  display: flex;
  align-items: center;
  gap: 6px;
  ${LayerOptionRow} & {
    margin-bottom: 4px;
  }
`

const LockRow = styled.div`
  display: flex;
  align-items: center;
  height: 39px;
  padding: 0 8px 4px;
`

const LockIcons = styled.div`
  display: flex;
  align-items: center;
  gap: 11px;
  margin: 0 9px 0 13px;
`

const DimButton = styled.button`
  opacity: 0.6;
`

const LayerArea = styled.div`
  display: flex;
  flex: 1;
  min-height: 0;
  background: #4d4d4d;
  border-bottom: 1px solid #404040;
`

const LayerList = styled.div`
  flex: 1;
`

const LayerRow = styled.div`
  display: flex;
  height: 51px;
  background: #535353;
  border-bottom: 1px solid #424242;
`

const EyeButton = styled.button`
  display: flex;
  align-items: center;
  justify-content: center;
  width: 38px;
  padding-top: 2px;
  border-right: 1px solid #424242;
`

const LayerBody = styled.div`
  display: flex;
  align-items: center;
  flex: 1;
  padding: 1px 18px 0 5px;
  background: ${({ $active }) => ($active ? '#6a6a6a' : '#535353')};
`

const corner = (x, y) => `linear-gradient(#fff, #fff) ${x} ${y} / 14px 1px no-repeat, linear-gradient(#fff, #fff) ${x} ${y} / 1px 11px no-repeat`

const Thumb = styled.span`
  position: relative;
  display: flex;
  align-items: center;
  justify-content: center;
  width: 39px;
  height: ${({ $kind }) => ($kind === 'plain' ? '40px' : '31px')};
  border: 1px solid #333;
  background: ${({ $kind }) => ($kind === 'plain' ? '#fff' : '#000')};
  &::before {
    content: '';
    display: ${({ $kind }) => ($kind === 'shape' ? 'block' : 'none')};
    position: absolute;
    inset: -4px;
    background: ${corner('left', 'top')}, ${corner('right', 'top')}, ${corner('left', 'bottom')}, ${corner('right', 'bottom')};
  }
`

const ThumbBadge = styled.span`
  position: absolute;
  right: 0;
  bottom: 0;
  padding: 1px;
  background: #535353;
`

const LayerName = styled.span`
  flex: 1;
  padding: 0 0 2px 14px;
`

const LayerScroll = styled.div`
  width: 20px;
  background: #4a4a4a;
`

const LayerFooter = styled.div`
  display: flex;
  align-items: center;
  justify-content: flex-end;
  height: 30px;
  flex: none;
  padding-right: 25px;
`

const FooterButton = styled.button`
  position: relative;
  display: flex;
  align-items: center;
  justify-content: center;
  width: 34px;
  height: 22px;
  color: ${({ $dim }) => ($dim ? '#8c8c8c' : '#dcdcdc')};
  &::after {
    content: '';
    display: ${({ $flyout }) => ($flyout ? 'block' : 'none')};
    position: absolute;
    right: 5px;
    bottom: -1px;
    border: 2px solid transparent;
    border-top-color: #fff;
    border-bottom: 0;
  }
`

const Fx = styled.span`
  font: italic 17px/20px 'Open Sans', sans-serif;
`

const Taskbar = styled.footer`
  display: flex;
  height: 9px;
  flex: none;
  padding-left: 509px;
  background: #050a12;
`

const TaskItem = styled.div`
  width: 200px;
  background: #50535a;
`

const ImeBar = styled.div`
  position: absolute;
  top: -6px;
  left: 1440px;
  display: flex;
  gap: 4px;
  width: 254px;
  height: 79px;
  padding: 6px 4px 4px;
  border: 7px solid #303030;
  border-radius: 13px;
  background: #060606;
  box-shadow: 0 1px 3px rgba(0, 0, 0, 0.5);
`

const ImeKey = styled.button`
  display: flex;
  align-items: center;
  justify-content: center;
  flex: 1;
  border: 1px solid transparent;
  border-bottom-width: 3px;
  border-radius: 9px;
  background: linear-gradient(#474747, #303030) padding-box,
    ${({ $rainbow, $color }) => ($rainbow
    ? 'linear-gradient(90deg, #1673c4, #12a52c 50%, #d8a210 75%)'
    : `linear-gradient(#222 20%, ${$color}aa 60%, ${$color}77)`)} border-box;
  color: ${({ $color }) => $color};
  font-size: 23px;
`

const Note = styled.div`
  position: absolute;
  left: 1195px;
  top: 274px;
  color: #f23333;
  font: 37px/42px 'Noto Serif CJK SC', 'Noto Sans CJK SC', serif;
`

const Arrows = styled.svg`
  position: absolute;
  left: 1130px;
  top: 260px;
  pointer-events: none;
`

export default App
